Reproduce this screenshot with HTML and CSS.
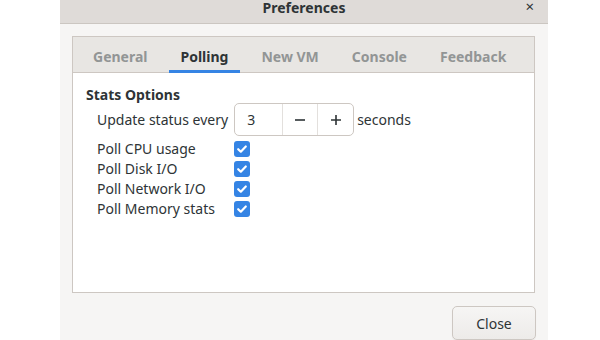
FILE: index.html
```html
<!DOCTYPE html>
<html>
<head>
<meta charset="utf-8">
<link rel="stylesheet" href="styles.css">
</head>
<body>
<div class="dialog">
  <div class="titlebar">
    <span class="title">Preferences</span>
    <span class="close-x">×</span>
  </div>
  <div class="body">
    <div class="notebook">
      <div class="tabs">
        <div class="tab">General</div>
        <div class="tab active">Polling</div>
        <div class="tab">New VM</div>
        <div class="tab">Console</div>
        <div class="tab">Feedback</div>
      </div>
      <div class="page">
        <div class="section-title">Stats Options</div>
        <div class="grid">
          <div class="label first">Update status every</div>
          <div class="spin-row">
            <div class="spin">
              <div class="spin-entry">3</div>
              <div class="spin-btn">
                <svg width="12" height="12" viewBox="0 0 12 12"><path d="M1 6h10" stroke="#2e3436" stroke-width="1.6"/></svg>
              </div>
              <div class="spin-btn">
                <svg width="12" height="12" viewBox="0 0 12 12"><path d="M1 6h10M6 1v10" stroke="#2e3436" stroke-width="1.6"/></svg>
              </div>
            </div>
            <span class="unit">seconds</span>
          </div>

          <div class="label">Poll CPU usage</div>
          <div class="cb-cell"><span class="check"><svg width="16" height="16" viewBox="0 0 16 16"><path d="M4.2 8.2l2.6 2.5 5-5.2" fill="none" stroke="#fff" stroke-width="2.2" stroke-linecap="round" stroke-linejoin="round"/></svg></span></div>

          <div class="label">Poll Disk I/O</div>
          <div class="cb-cell"><span class="check"><svg width="16" height="16" viewBox="0 0 16 16"><path d="M4.2 8.2l2.6 2.5 5-5.2" fill="none" stroke="#fff" stroke-width="2.2" stroke-linecap="round" stroke-linejoin="round"/></svg></span></div>

          <div class="label">Poll Network I/O</div>
          <div class="cb-cell"><span class="check"><svg width="16" height="16" viewBox="0 0 16 16"><path d="M4.2 8.2l2.6 2.5 5-5.2" fill="none" stroke="#fff" stroke-width="2.2" stroke-linecap="round" stroke-linejoin="round"/></svg></span></div>

          <div class="label">Poll Memory stats</div>
          <div class="cb-cell"><span class="check"><svg width="16" height="16" viewBox="0 0 16 16"><path d="M4.2 8.2l2.6 2.5 5-5.2" fill="none" stroke="#fff" stroke-width="2.2" stroke-linecap="round" stroke-linejoin="round"/></svg></span></div>
        </div>
      </div>
    </div>
    <div class="actions">
      <button class="btn">Close</button>
    </div>
  </div>
</div>
</body>
</html>
```

FILE: styles.css
```css
html, body {
  margin: 0;
  padding: 0;
  background: #ffffff;
}
body {
  font-family: "Noto Sans", "Open Sans", sans-serif;
  font-size: 14px;
  color: #2e3436;
  width: 600px;
  height: 340px;
  overflow: hidden;
}
.dialog {
  margin-left: 60px;
  width: 488px;
  height: 340px;
  background: #f6f5f4;
  display: flex;
  flex-direction: column;
}
.titlebar {
  position: relative;
  height: 24px;
  box-sizing: border-box;
  background: #dfdbd8;
  border-bottom: 1px solid #cbc6c1;
  display: flex;
  justify-content: center;
  padding-top: 1px;
}
.title {
  font-weight: bold;
  font-size: 14px;
  line-height: 14px;
  color: #2e3436;
}
.close-x {
  position: absolute;
  right: 14px;
  top: 0;
  font-size: 15px;
  line-height: 12px;
  color: #2e3436;
}
.body {
  padding: 12px 13px 0 12px;
  display: flex;
  flex-direction: column;
}
.notebook {
  height: 257px;
  box-sizing: border-box;
  border: 1px solid #cdc7c2;
  background: #ffffff;
  display: flex;
  flex-direction: column;
}
.tabs {
  height: 36px;
  box-sizing: border-box;
  background: #e8e6e3;
  border-bottom: 1px solid #cdc7c2;
  display: flex;
  padding-left: 8px;
  gap: 9px;
}
.tab {
  padding: 6px 12px 0;
  font-weight: bold;
  font-size: 14px;
  color: #929595;
  display: flex;
  align-items: center;
  box-sizing: border-box;
  height: 36px;
  border-bottom: 3px solid transparent;
  margin-bottom: -1px;
}
.tab.active {
  color: #2e3436;
  border-bottom-color: #3584e4;
}
.page {
  padding: 13px 0 0 13px;
}
.section-title {
  font-weight: bold;
  line-height: 18px;
}
.grid {
  margin-left: 11px;
  margin-top: -1px;
  display: grid;
  grid-template-columns: max-content max-content;
  grid-template-rows: 36px;
  grid-auto-rows: 20px;
  column-gap: 6px;
  align-items: center;
}
.label {
  line-height: 20px;
  white-space: nowrap;
}
.label.first {
  align-self: start;
  margin-top: 7px;
}
.spin-row {
  display: flex;
  align-items: center;
  gap: 3px;
  align-self: start;
}
.spin {
  display: flex;
  height: 33px;
  box-sizing: border-box;
  border: 1px solid #cdc7c2;
  border-radius: 5px;
  background: #ffffff;
}
.spin-entry {
  width: 47px;
  box-sizing: border-box;
  padding-left: 12px;
  display: flex;
  align-items: center;
}
.spin-btn {
  width: 34px;
  border-left: 1px solid #e3e0dd;
  display: flex;
  align-items: center;
  justify-content: center;
}
.spin-btn:last-child {
  width: 35px;
}
.cb-cell {
  display: flex;
  align-items: center;
}
.check {
  width: 16px;
  height: 16px;
  border-radius: 3px;
  background: #3584e4;
  display: block;
}
.check svg {
  display: block;
}
.actions {
  display: flex;
  justify-content: flex-end;
  padding-top: 13px;
  margin-right: -1px;
}
.btn {
  width: 84px;
  height: 34px;
  font-family: inherit;
  font-size: 14px;
  color: #2e3436;
  border: 1px solid #cdc7c2;
  border-radius: 5px;
  background: linear-gradient(#f6f5f4, #edebe9);
  box-shadow: 0 1px 1px rgba(0,0,0,0.05);
}
```
